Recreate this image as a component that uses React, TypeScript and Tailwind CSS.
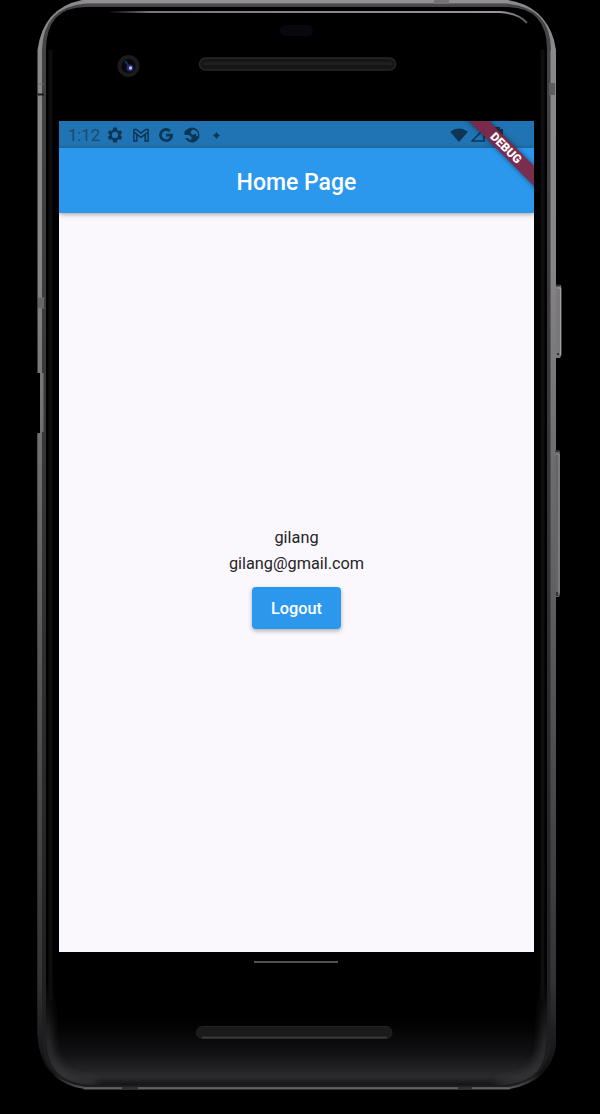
import type { ReactNode } from "react";

function PhoneBody() {
  return (
    <svg className="absolute inset-0" width="600" height="1114" viewBox="0 0 600 1114" fill="none" aria-hidden="true">
      <defs>
        <linearGradient id="rail" x1="0" y1="0" x2="0" y2="1090" gradientUnits="userSpaceOnUse">
          <stop offset="0" stopColor="#8b898c" />
          <stop offset="0.25" stopColor="#858386" />
          <stop offset="0.45" stopColor="#6a696b" />
          <stop offset="0.7" stopColor="#4c4b4d" />
          <stop offset="0.9" stopColor="#333234" />
          <stop offset="0.955" stopColor="#1c1b1d" />
          <stop offset="0.985" stopColor="#101011" />
          <stop offset="1" stopColor="#5a595b" />
        </linearGradient>
        <linearGradient id="inner" x1="0" y1="0" x2="0" y2="1090" gradientUnits="userSpaceOnUse">
          <stop offset="0" stopColor="#454446" />
          <stop offset="0.5" stopColor="#343335" />
          <stop offset="1" stopColor="#1c1b1d" />
        </linearGradient>
        <linearGradient id="chin" x1="0" y1="1020" x2="0" y2="1086" gradientUnits="userSpaceOnUse">
          <stop offset="0" stopColor="#000000" />
          <stop offset="0.5" stopColor="#111012" />
          <stop offset="0.86" stopColor="#2b2a2c" />
          <stop offset="1" stopColor="#111012" />
        </linearGradient>
        <linearGradient id="cornerGlow" x1="0" y1="980" x2="0" y2="1084" gradientUnits="userSpaceOnUse">
          <stop offset="0" stopColor="#39383a" stopOpacity="0" />
          <stop offset="0.6" stopColor="#39383a" />
          <stop offset="1" stopColor="#39383a" />
        </linearGradient>
        <linearGradient id="topLine" x1="108" y1="0" x2="528" y2="0" gradientUnits="userSpaceOnUse">
          <stop offset="0" stopColor="#777578" stopOpacity="0" />
          <stop offset="0.1" stopColor="#777578" />
          <stop offset="0.94" stopColor="#99979a" />
          <stop offset="1" stopColor="#555356" />
        </linearGradient>
        <filter id="soft" filterUnits="userSpaceOnUse" x="30" y="900" width="540" height="200">
          <feGaussianBlur stdDeviation="5" />
        </filter>
        <clipPath id="bodyClip">
          <path d="M86 7H506Q547 7 547 50V1038Q547 1085 500 1085H94Q46 1085 46 1038V50Q46 7 86 7Z" />
        </clipPath>
      </defs>

      <path d="M82 0H508Q544 6 554 40L556 50V1045Q551 1081 510 1089H84Q47 1083 39 1048L37.500 1036V433H40V373H37.500V50Q43 8 82 0Z" fill="url(#rail)" />
      <path d="M86 3.500H506Q551 7 551 50V1045Q546 1081 508 1087H86Q44 1082 42 1042V50Q43 7 86 3.500Z" fill="url(#inner)" />
      <path d="M86 7H506Q547 7 547 50V1038Q547 1085 500 1085H94Q46 1085 46 1038V50Q46 7 86 7Z" fill="#000" />
      <g clipPath="url(#bodyClip)">
        <rect x="46" y="1020" width="502" height="66" fill="url(#chin)" />
        <path d="M47 980V1036Q48 1084 96 1084M546 980V1036Q545 1084 498 1084" stroke="url(#cornerGlow)" strokeWidth="8" filter="url(#soft)" />
        <path d="M50.500 50V1000M542.500 50V1000" stroke="#0d0c0f" strokeWidth="4" />
      </g>
      <path d="M39.500 50V372M42 373V432M39 434V1036" stroke="url(#rail)" strokeWidth="3" />
      <path d="M553 50V1044" stroke="url(#rail)" strokeWidth="5" />
      <path d="M84 1.500H508" stroke="#929093" strokeWidth="3" />
      <path d="M84 5H508" stroke="#4b494c" strokeWidth="2" />
      <path d="M108 12H500Q518 13 527 23" stroke="url(#topLine)" strokeWidth="2" />
      <path d="M84 1088.500H510" stroke="#626163" strokeWidth="2" />
      <path d="M122 1088H138M458 1088H472" stroke="#302f31" strokeWidth="2.500" />

      <path d="M434 2H449" stroke="#747275" strokeWidth="4" />
      <path d="M38 84H44M39 298H45M39 308H45" stroke="#6a696b" />
      <path d="M37.500 94.500H44" stroke="#1a191b" strokeWidth="2" />
      <rect x="549" y="83" width="6" height="12" fill="#5c5b5d" />
      <rect x="38" y="298" width="6" height="10" fill="#666567" />

      <path d="M556 285H560.500Q561.500 286 561.500 290V355L560 358H556Z" fill="#79777a" />
      <path d="M557 288H560.500V355" stroke="#a3a1a4" />
      <path d="M556 285.500H560M558 353V355" stroke="#343335" strokeWidth="2" />
      <path d="M555.500 450H559Q560 451 560 455V594L559 597H555.500Z" fill="#656466" />
      <path d="M556 454H559V593" stroke="#8e8c8f" />
      <path d="M555.500 451H559M557 592V596" stroke="#343335" strokeWidth="2" />

      <circle cx="128.500" cy="66" r="11" fill="#1b1a1c" />
      <circle cx="128.500" cy="66" r="7" fill="#08080e" />
      <path d="M125 61L130 68" stroke="#15345f" strokeWidth="2" />
      <circle cx="130" cy="68" r="3.500" fill="#242b70" />
      <circle cx="130.500" cy="68" r="1.700" fill="#b1c1ef" />
      <rect x="280" y="25" width="33" height="11" rx="5.500" fill="#09070e" />

      <rect x="199.500" y="58" width="196" height="12" rx="6" fill="#171617" stroke="#272628" strokeWidth="1.500" />
      <path d="M204 63.500H392" stroke="#201e20" strokeWidth="3" />
      <rect x="196.500" y="1026.500" width="195.500" height="12" rx="6" fill="#1b1a1b" stroke="#252425" />
      <path d="M202 1037.500H387" stroke="#373638" strokeWidth="2" />
      <rect x="254" y="961" width="84" height="2" fill="#504f51" />
    </svg>
  );
}

function StatusIcon({ className, children }: { className: string; children: ReactNode }) {
  return (
    <svg className={className} viewBox="0 0 24 24" fill="#0d3554" aria-hidden="true">
      {children}
    </svg>
  );
}

function StatusBar() {
  return (
    <div className="flex h-[27px] shrink-0 items-center bg-[#2174b3] pl-[9px] pr-[31px] pt-px text-[#1b4a70]">
      <span className="w-[37px] text-[17px] leading-none tracking-[-0.2px]">1:12</span>
      <StatusIcon className="ml-px size-[18px]">
        <path fillRule="evenodd" d="M19.400 13a7.500 7.500 0 0 0 0-2l2.200-1.700-2.200-3.800-2.600 1a8 8 0 0 0-1.800-1L14.500 2h-5L9 5.500a8 8 0 0 0-1.800 1l-2.600-1-2.200 3.800L4.600 11a7.500 7.500 0 0 0 0 2l-2.200 1.700 2.200 3.800 2.600-1a8 8 0 0 0 1.800 1l.5 3.500h5l.5-3.500a8 8 0 0 0 1.800-1l2.600 1 2.200-3.800L19.400 13ZM12 16.200a4.200 4.200 0 1 1 0-8.400 4.200 4.200 0 0 1 0 8.400Z" />
      </StatusIcon>
      <StatusIcon className="ml-[8px] size-[18px]">
        <path d="M2.500 4v16h4v-8.500M21.500 4v16h-4v-8.500M2.500 4.500h3L12 9.500l6.500-5h3M3 8.500l9 6.500 9-6.500" fill="none" stroke="#0d3554" strokeWidth="2" />
      </StatusIcon>
      <StatusIcon className="ml-[7px] size-[18px]">
        <path d="M12 10.200h9.300c.9 6.300-3.200 11-9.300 11A9.200 9.200 0 1 1 18.400 5.400l-2.600 2.500A5.600 5.600 0 1 0 17.400 14H12v-3.800Z" />
      </StatusIcon>
      <StatusIcon className="ml-[8px] size-[18px]">
        <path fillRule="evenodd" d="M12 2a10 10 0 1 1-9.200 14H7l2 3 3-3-4-4H2A10 10 0 0 1 12 2Zm0 3-2 4 3 3 4-2 1 4 2-1a8 8 0 0 0-5-8h-3Z" />
        <path d="M2 7l5-3 2 3-4 5-3-1V7Z" />
      </StatusIcon>
      <svg className="ml-[12px] size-[7px]" viewBox="0 0 8 8" fill="#0d3554"><path d="M4 0 5.600 2.400 8 4 5.600 5.600 4 8 2.400 5.600 0 4l2.400-1.600Z" /></svg>
      <svg className="ml-auto h-[15px] w-[18px]" viewBox="0 0 19 16" fill="#0d3554"><path d="M0 4Q9.500-3 19 4L9.500 15Z" /></svg>
      <svg className="ml-[3px] size-[14px]" viewBox="0 0 14 14" fill="none" stroke="#0d3554" strokeWidth="1.600"><path d="M1 13 13 1V13Z" /></svg>
      <svg className="ml-[7px] h-[16px] w-[11px]" viewBox="0 0 11 16" fill="#0d3554"><path d="M3 0h5v2h3v14H0V2h3Z" /></svg>
    </div>
  );
}

export default function App() {
  return (
    <main className="relative h-[1114px] w-[600px] overflow-hidden bg-black pl-[59px] pt-[121px] font-['Roboto',sans-serif]">
      <PhoneBody />
      <section className="relative flex h-[831px] w-[475px] flex-col overflow-hidden bg-[#faf8fc]">
        <StatusBar />
        <header className="relative flex h-[65px] shrink-0 items-center justify-center bg-[#2b98ee] shadow-[0_1px_5px_rgba(0,0,0,0.4)]">
          <h1 className="pt-[3px] text-[23px] leading-none font-medium text-white">Home Page</h1>
        </header>
        <div className="flex flex-1 flex-col items-center pt-[312px] text-[#252427]">
          <p className="text-[16.300px] leading-[26px]">gilang</p>
          <p className="text-[16.300px] leading-[26px]">gilang@gmail.com</p>
          <button className="mt-[10px] h-[42px] w-[89px] rounded-[4px] bg-[#2b98ee] pt-[2px] text-[16.300px] font-medium text-white shadow-[0_2px_4px_rgba(0,0,0,0.3)]">Logout</button>
        </div>
        <div className="absolute top-[20px] right-[-32px] flex h-[14px] w-[120px] rotate-45 items-center justify-center bg-[#802747]/95 text-[12px] leading-none font-black text-white shadow-[0_0_5px_rgba(0,0,0,0.5)]">
          DEBUG
        </div>
      </section>
    </main>
  );
}
